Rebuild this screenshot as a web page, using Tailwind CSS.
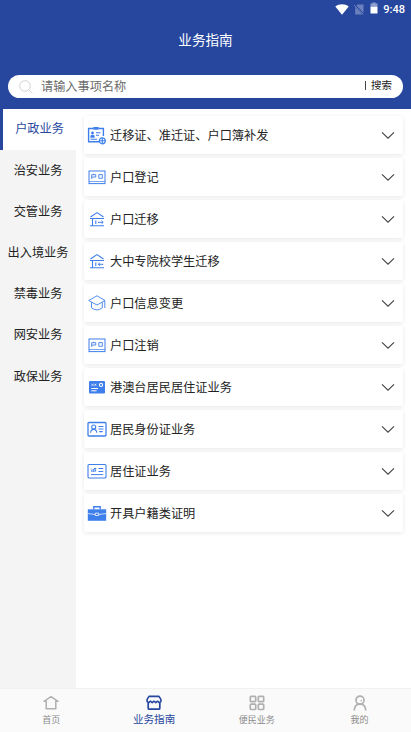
<!DOCTYPE html>
<html lang="zh-CN">

<head>
    <meta charset="UTF-8" />
    <meta name="viewport" content="width=device-width, initial-scale=1.0" />
    <title>业务指南</title>
    <script src="https://cdn.jsdelivr.net/npm/@tailwindcss/browser@4"></script>
</head>

<body class="h-screen flex flex-col overflow-hidden bg-white text-[#222] font-['Roboto','Noto_Sans_CJK_SC',sans-serif]">
    <header class="h-[109px] shrink-0 bg-[#27479f] text-white">
        <!-- status bar -->
        <div class="h-[18px] flex items-center justify-end pr-[6px]">
            <svg class="w-[14px] h-[11px] mr-[5px]" viewBox="0 0 14 11" fill="#fff">
                <path d="M0.3 2.6C4 -0.5 10 -0.5 13.7 2.6L7 10.8Z" />
            </svg>
            <svg class="w-[10px] h-[11px] mr-[6px]" viewBox="0 0 10 11">
                <path d="M3.5 0.5H9.5V10.5H1.2V3Z" fill="#6c81bd" />
                <path d="M0.5 1L9.5 10.3" stroke="#27479f" stroke-width="1.8" />
                <path d="M0.2 1.2L9 10.3" stroke="#8799ca" stroke-width="0.8" />
            </svg>
            <svg class="w-[8px] h-[12px] mr-[5px] -translate-y-px" viewBox="0 0 8 12">
                <path d="M2.5 0.5H5.5V1.5H7.5V5H0.5V1.5H2.5Z" fill="#8e9fce" />
                <path d="M0.5 4.8H7.5V11.5H0.5Z" fill="#fff" />
            </svg>
            <span class="text-[11px] font-medium leading-none">9:48</span>
        </div>
        <h1 class="h-[44px] text-center text-[13.6px] leading-[44px]">业务指南</h1>
        <div class="mt-[13px] mx-[8px] h-[23px] flex items-center rounded-full bg-white pl-[11px] pr-[11px]">
            <svg class="w-[14px] h-[14px]" viewBox="0 0 14 14" fill="none" stroke="#c9c9c9" stroke-width="0.8">
                <circle cx="6" cy="6" r="5.3" />
                <path d="M9.8 9.8L13.4 13.4" />
            </svg>
            <span class="ml-[8px] text-[12.2px] leading-none text-[#6c6c6c] translate-y-px">请输入事项名称</span>
            <span class="ml-auto w-px h-[9px] bg-[#444] -translate-y-px"></span>
            <span class="ml-[5px] text-[10.5px] leading-none text-[#222]">搜索</span>
        </div>
    </header>

    <main class="flex-1 min-h-0 flex">
        <nav id="sideBar" class="w-[76px] shrink-0 bg-[#f4f4f4]"></nav>
        <div id="cards" class="flex-1 px-[8px] pt-[7px] flex flex-col gap-[4px]"></div>
    </main>

    <footer class="h-[44px] shrink-0 grid grid-cols-4 bg-[#fafafa] border-t border-[#f1f1f1] text-[#8b8b8b] text-[9px]">
        <div class="flex flex-col items-center pt-[6px]">
            <svg class="w-[16px] h-[16px]" viewBox="0 0 16 16" fill="none" stroke="#b0b0b0" stroke-width="1.5" stroke-linejoin="round" stroke-linecap="round">
                <path d="M1 6.3L8 1.7L15 6.3H12.8V13.7H3.2V6.3Z" />
            </svg>
            <span class="mt-[3px] leading-[12px]">首页</span>
        </div>
        <div class="flex flex-col items-center pt-[6px] text-[#27479f]">
            <svg class="w-[16px] h-[16px]" viewBox="0 0 16 16" fill="none" stroke="#27479f" stroke-width="1.7" stroke-linejoin="round">
                <path d="M3 1.4H13L14.9 4.4V6.6L13.3 7.6L11.6 6.2L9.8 7.6L8 6.2L6.2 7.6L4.4 6.2L2.7 7.6L1.1 6.6V4.4Z" stroke-width="1.6" />
                <path d="M2.2 7.5V13.2Q2.2 14.2 3.2 14.2H12.8Q13.8 14.2 13.8 13.2V7.5" />
            </svg>
            <span class="mt-[3px] text-[10.6px] leading-[12px]">业务指南</span>
        </div>
        <div class="flex flex-col items-center pt-[6px]">
            <svg class="w-[16px] h-[16px]" viewBox="0 0 16 16" fill="none" stroke="#b0b0b0" stroke-width="1.7">
                <rect x="1.3" y="1.3" width="5.4" height="5.4" rx="1" />
                <rect x="9.3" y="1.3" width="5.4" height="5.4" rx="1" />
                <rect x="1.3" y="9.1" width="5.4" height="5.4" rx="1" />
                <rect x="9.3" y="9.1" width="5.4" height="5.4" rx="1" />
            </svg>
            <span class="mt-[3px] leading-[12px]">便民业务</span>
        </div>
        <div class="flex flex-col items-center pt-[6px]">
            <svg class="w-[16px] h-[16px]" viewBox="0 0 16 16" fill="none" stroke="#b0b0b0" stroke-width="1.7">
                <circle cx="8" cy="5.2" r="4" />
                <path d="M2.2 15.5C2.4 11.5 4.6 9.2 8 9.2S13.6 11.5 13.8 15.5" />
                <path d="M8.5 5.6H10" stroke-width="1.2" />
            </svg>
            <span class="mt-[3px] leading-[12px]">我的</span>
        </div>
    </footer>

    <script>
        const tabs = ["户政业务", "治安业务", "交管业务", "出入境业务", "禁毒业务", "网安业务", "政保业务"];

        // household book with the two small characters
        const book = `<rect x="2" y="4" width="16" height="12.6" stroke-width="1" />
            <path d="M2 14.5H18" stroke-width="0.7" />
            <path d="M4.7 12V7.7H8.8V10H4.9M6.7 6.7V7.8M11.8 7.6H15.3V11.3H11.8Z" stroke-width="0.9" />`;
        const house = `<path d="M3.5 8L10 3.6L16.5 8M3 9.5H17M3 16.8H17M5.5 9.5V16.8M8.8 11.5V15" stroke-width="1.1" />`;

        const icons = {
            permit: `<path d="M6.5 3.5H1.6V16.7H12M11.5 3.5H16.4V11" stroke-width="1.4" />
                <path d="M6.3 2H11.7V4.7H6.3Z" fill="#3f7fec" stroke="none" />
                <circle cx="5.5" cy="8" r="1.4" fill="#3f7fec" stroke="none" />
                <path d="M3.4 12.8V10.8Q5.5 8.9 7.6 10.8V12.8Z" fill="#3f7fec" stroke="none" />
                <path d="M9 7.7H13.5M9 10.3H12M3.5 14.2H10" stroke-width="1.1" />
                <circle cx="15.3" cy="15.8" r="3" stroke-width="1.2" />
                <path d="M15.3 13V18.5M12.5 15.8H18" stroke-width="1.1" />`,
            book: book,
            moveOut: house + `<path d="M11 13.3H16M14.5 11.7L16.2 13.3L14.5 14.9" stroke-width="1" />`,
            moveIn: house + `<path d="M11.3 13.3H16.3M12.9 11.7L11.2 13.3L12.9 14.9" stroke-width="1" />`,
            cap: `<path d="M10 2.8L18 7.5L10 12L1.8 7.5ZM4.5 9.3V14.8Q10 19 15.3 14.8V9.3M17.8 7.8V15" stroke-width="0.9" />`,
            card: `<rect x="2" y="4" width="16" height="12.5" rx="1" fill="#3f7fec" stroke="none" />
                <path d="M4.5 6.8L6.5 8.8M6.5 6.8L4.5 8.8M7.5 6.8L9.2 8.8M9.2 6.8L7.5 8.8" stroke="#fff" stroke-width="0.7" />
                <path d="M4.3 11.5H11M4.3 13.8H9.5" stroke="#fff" stroke-width="1" />
                <circle cx="14" cy="7.9" r="1.6" stroke="#fff" stroke-width="1.1" />`,
            idCard: `<rect x="1" y="3.5" width="18" height="13.5" rx="1" stroke-width="1.3" />
                <circle cx="6.7" cy="8" r="2" stroke-width="1.1" />
                <path d="M3.6 13.8Q3.8 10.4 6.7 10.4T9.7 13.8M11.5 7.5H16.5M11.5 10H16.5M12.3 12.6H15.7" stroke-width="1.1" />`,
            residence: `<rect x="1" y="3.5" width="18" height="13.5" rx="1" stroke-width="1.1" />
                <path d="M4 7.5L5 8.5M4.8 9V11M6.3 8V11M8 7.5V11M7 7.5H9.3M8 9.2H9.2M11.5 7.5H16.2M11.5 10.5H16.2M4 13.6H16.2" stroke-width="1" />`,
            briefcase: `<path d="M0.8 6.3H19.2V17.8H0.8Z" fill="#3f7fec" stroke="none" />
                <path d="M6.8 6.3V3.7H13.2V6.3" stroke-width="1.4" />
                <path d="M0.8 10.5L8 11.5M12 11.5L19.2 10.5" stroke="#fff" stroke-width="0.7" />
                <path d="M8.3 10.1H11.7V12.5H8.3Z" fill="#3f7fec" stroke="#fff" stroke-width="0.8" />`
        };

        const items = [
            ["permit", "迁移证、准迁证、户口簿补发"],
            ["book", "户口登记"],
            ["moveOut", "户口迁移"],
            ["moveIn", "大中专院校学生迁移"],
            ["cap", "户口信息变更"],
            ["book", "户口注销"],
            ["card", "港澳台居民居住证业务"],
            ["idCard", "居民身份证业务"],
            ["residence", "居住证业务"],
            ["briefcase", "开具户籍类证明"]
        ];

        document.getElementById("sideBar").innerHTML = tabs.map((t, i) => {
            const state = i === 0 ? "bg-white border-l-3 border-[#27479f] text-[#27479f]" : "";
            return `<div class="h-[41.2px] flex items-center justify-center text-[12.2px] leading-none ${state}"><span class="whitespace-nowrap">${t}</span></div>`;
        }).join("");

        document.getElementById("cards").innerHTML = items.map(([icon, name]) => `
            <div class="h-[38px] shrink-0 flex items-center bg-white rounded-[2px] shadow-[0_1px_4px_rgba(0,0,0,0.1)] pl-[3px] pr-[8px]">
                <svg class="w-[20px] h-[20px]" viewBox="0 0 20 20" fill="none" stroke="#3f7fec">${icons[icon]}</svg>
                <span class="ml-[3px] text-[12.2px] leading-none translate-y-px">${name}</span>
                <svg class="ml-auto w-[14px] h-[8px]" viewBox="0 0 14 8" fill="none" stroke="#444" stroke-width="1.1">
                    <path d="M1 1.3L7 7.2L13 1.3" />
                </svg>
            </div>`).join("");
    </script>
</body>

</html>
